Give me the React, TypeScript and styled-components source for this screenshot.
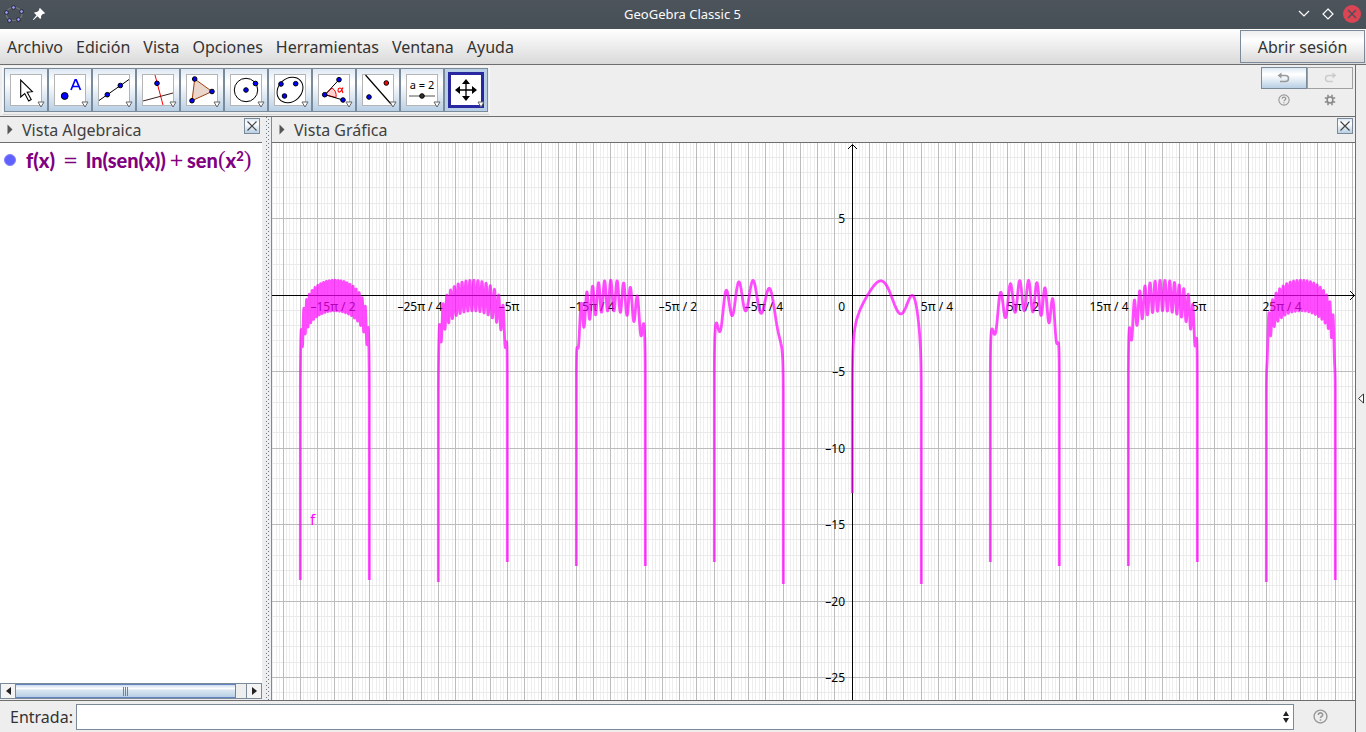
import React from "react";
import styled, { createGlobalStyle } from "styled-components";

const Global = createGlobalStyle`
  *, *::before, *::after { box-sizing: border-box; }
  html, body, #root { height: 100%; }
  body {
    margin: 0;
    overflow: hidden;
    background: #eeeeee;
    color: #333333;
    font-family: "Noto Sans", "Open Sans", sans-serif;
    font-size: 16px;
  }
  button, input { font: inherit; color: inherit; margin: 0; padding: 0; }
`;

const metal = "linear-gradient(#dde8f3 0%, #ffffff 30%, #ffffff 34%, #b8cfe5 100%)";

const Window = styled.div`
  display: flex;
  flex-direction: column;
  height: 100%;
`;

const TitleBar = styled.header`
  display: grid;
  grid-template-columns: 1fr auto 1fr;
  align-items: center;
  flex: none;
  height: 29px;
  padding: 0 5px 1px 4px;
  background: linear-gradient(#4d545b, #475057);
  color: #fcfcfc;
`;

const Title = styled.h1`
  margin: 0;
  font-size: 13px;
  font-weight: 400;
  line-height: 28px;
`;

const TitleGroup = styled.div<{ $end?: boolean }>`
  display: flex;
  align-items: center;
  gap: 6px;
  justify-content: ${(p) => (p.$end ? "flex-end" : "flex-start")};
`;

const PlainButton = styled.button<{ $w: number; $h: number }>`
  display: flex;
  align-items: center;
  justify-content: center;
  flex: none;
  width: ${(p) => p.$w}px;
  height: ${(p) => p.$h}px;
  border: 0;
  background: none;
`;

const MenuBar = styled.nav`
  display: flex;
  align-items: center;
  justify-content: space-between;
  flex: none;
  height: 36px;
  padding: 0 1px 0 7px;
  border-bottom: 1px solid #6e6e6e;
  background: linear-gradient(#ffffff, #dadada);
`;

const MenuList = styled.div`
  display: flex;
  gap: 13px;
`;

const MenuItem = styled.button`
  border: 0;
  background: none;
  line-height: 24px;
`;

const SignIn = styled.button`
  width: 125px;
  height: 33px;
  border: 1px solid #7a8a99;
  background: linear-gradient(#eeeeee, #ffffff 30%, #dadada);
`;

const Body = styled.div`
  display: flex;
  flex: 1;
  min-height: 0;
`;

const Main = styled.div`
  display: flex;
  flex-direction: column;
  flex: 1;
  min-width: 0;
`;

const PerspectiveRail = styled.button`
  display: flex;
  align-items: center;
  justify-content: center;
  flex: none;
  width: 11px;
  border: 0;
  border-left: 1px solid #6e6e6e;
  background: #eeeeee;
`;

const ToolBar = styled.div`
  display: flex;
  justify-content: space-between;
  flex: none;
  height: 52px;
  padding: 1px 2px 0 2px;
  border-bottom: 1px solid #6e6e6e;
`;

const Tools = styled.div`
  display: flex;
  height: 49px;
  padding: 1px;
  border: 1px solid #f8f8f8;
  border-bottom-color: #d4d4d4;
`;

const Tool = styled.button<{ $active?: boolean }>`
  display: flex;
  align-items: center;
  justify-content: center;
  width: 44px;
  height: 44px;
  border: 1px solid #7a8a99;
  background: ${(p) => (p.$active ? "#b8cfe5" : metal)};
  svg {
    display: block;
    overflow: visible;
    width: ${(p) => (p.$active ? 36 : 32)}px;
    height: ${(p) => (p.$active ? 36 : 32)}px;
    border: ${(p) => (p.$active ? "3px solid #2828a0" : "1px solid #b4b4b4")};
    background: #ffffff;
  }
`;

const SideTools = styled.div`
  display: grid;
  grid-template-columns: 46px 46px;
  grid-template-rows: 22px 22px;
  padding-top: 1px;
`;

const UndoButton = styled.button<{ $off?: boolean }>`
  display: flex;
  align-items: center;
  justify-content: center;
  border: 1px solid ${(p) => (p.$off ? "#a0a0a0" : "#7a8a99")};
  background: ${(p) => (p.$off ? "#eeeeee" : metal)};
`;

const SmallButton = styled.button`
  display: flex;
  align-items: center;
  justify-content: center;
  border: 0;
  background: none;
`;

const Views = styled.div`
  display: flex;
  flex: 1;
  min-height: 0;
`;

const Pane = styled.section<{ $width?: number }>`
  display: flex;
  flex-direction: column;
  flex: ${(p) => (p.$width ? "none" : "1")};
  width: ${(p) => (p.$width ? p.$width + "px" : "auto")};
  min-width: 0;
`;

const PaneHead = styled.header`
  display: flex;
  align-items: center;
  flex: none;
  gap: 8px;
  height: 26px;
  padding: 0 2px 0 6px;
  border-bottom: 1px solid #6e6e6e;
  background: #eeeeee;
`;

const PaneTitle = styled.h2`
  flex: 1;
  margin: 0;
  color: #404040;
  font-size: 16px;
  font-weight: 400;
  line-height: 24px;
`;

const CloseButton = styled.button`
  display: flex;
  align-items: center;
  justify-content: center;
  align-self: flex-start;
  width: 16px;
  height: 16px;
  margin-top: 1px;
  border: 1px solid #7a8a99;
  background: ${metal};
`;

const Splitter = styled.div`
  flex: none;
  width: 10px;
  border-right: 1px solid #7a8a99;
`;

const AlgebraBody = styled.div`
  flex: 1;
  min-height: 0;
  background: #ffffff;
`;

const Row = styled.div`
  display: flex;
  align-items: center;
  gap: 10px;
  height: 34px;
  padding-left: 4px;
`;

const Marker = styled.button`
  width: 12px;
  height: 12px;
  border: 1px solid #8080ff;
  border-radius: 50%;
  background: #6060ff;
`;

const Formula = styled.div`
  display: flex;
  align-items: center;
  color: #800080;
  font-family: Lato, sans-serif;
  font-size: 20px;
  font-weight: 900;
  line-height: 24px;
  white-space: pre;
  sup { font-size: 13px; line-height: 0; vertical-align: 7px; }
`;

const Sign = styled.span<{ $gap: number }>`
  margin: 0 ${(p) => p.$gap}px;
  font-family: "DejaVu Sans", sans-serif;
  font-size: 18px;
  font-weight: 400;
`;

const ThinParen = styled.span`
  font-family: "Liberation Serif", serif;
  font-size: 23px;
  font-weight: 400;
`;

const ScrollBar = styled.div`
  display: flex;
  flex: none;
  height: 16px;
  margin-bottom: 1px;
  border-top: 1px solid #7a8a99;
  border-bottom: 1px solid #7a8a99;
  background: #eeeeee;
`;

const ScrollArrow = styled.button`
  display: flex;
  align-items: center;
  justify-content: center;
  width: 16px;
  border: 1px solid #7a8a99;
  border-width: 0 1px;
  background: #f4f4f4;
`;

const ScrollTrack = styled.div`
  display: flex;
  flex: 1;
`;

const ScrollThumb = styled.div`
  display: flex;
  align-items: center;
  justify-content: center;
  gap: 1px;
  width: 220px;
  border: 1px solid #6382bf;
  border-left: 0;
  background: linear-gradient(#c8dbee, #ffffff 30%, #dde8f3 40%, #b8cfe5);
`;

const Grip = styled.i`
  width: 1px;
  height: 9px;
  background: #6382bf;
`;

const InputBar = styled.form`
  display: flex;
  align-items: center;
  flex: none;
  height: 32px;
  border-top: 1px solid #6e6e6e;
  padding: 0 27px 0 10px;
`;

const InputLabel = styled.label`
  width: 66px;
  line-height: 24px;
`;

const InputField = styled.div`
  display: flex;
  align-items: center;
  flex: 1;
  height: 26px;
  margin-right: 18px;
  padding-right: 4px;
  border: 1px solid #7a8a99;
  background: #ffffff;
`;

const CommandInput = styled.input`
  flex: 1;
  height: 22px;
  border: 0;
  outline: 0;
  background: transparent;
`;

const Plot = styled.svg`
  display: block;
  flex: 1;
  width: 100%;
  min-height: 0;
  background: #ffffff;
  font-family: "Noto Sans", sans-serif;
  font-size: 12px;
`;

const Dot = ({ x, y, r = 2.3, fill = "#0000ff" }: { x: number; y: number; r?: number; fill?: string }) => (
  <circle cx={x} cy={y} r={r} fill={fill} stroke="#000" strokeWidth="1" />
);

const MoreArrow = () => <path d="M27 27h6l-3 5z" fill="#fff" stroke="#666" strokeWidth="1" />;

const tools: { name: string; art: React.ReactNode }[] = [
  { name: "Elige y mueve", art: <path d="M9.700 5v17l4-3.500 4 7.500 2.500-1.500-4-7.200 5.200-.6z" fill="#fff" stroke="#000" strokeWidth="1.100" /> },
  { name: "Punto", art: <><Dot x={9.700} y={21} r={3.400} /><path d="M16 15 20.200 4.800h1l4.300 10.200M17.500 11.500h6.500" stroke="#00f" fill="none" strokeWidth="1.700" /></> },
  { name: "Recta", art: <><path d="M0 25.500 30 4.500" stroke="#000" /><Dot x={8.300} y={19.700} /><Dot x={21.300} y={10.500} /></> },
  { name: "Perpendicular", art: <><path d="M12 0l8 30" stroke="#f00" /><path d="M0 26 30 18" stroke="#402020" /><Dot x={14} y={8.300} /></> },
  { name: "Polígono", art: <><path d="M7.700 4 25 16.500 5 25.700z" fill="#ead6cb" stroke="#a04010" /><Dot x={7.700} y={4} /><Dot x={25} y={16.500} /><Dot x={5} y={25.700} /></> },
  { name: "Circunferencia", art: <><circle cx="15" cy="15" r="11.700" fill="none" stroke="#000" /><Dot x={15} y={15} /><Dot x={24.500} y={8.500} /></> },
  { name: "Elipse", art: <><ellipse cx="15" cy="15" rx="14" ry="11.500" transform="rotate(-42 15 15)" fill="none" stroke="#000" /><Dot x={6} y={9} /><Dot x={20.700} y={8.700} /><Dot x={9.500} y={21} /></> },
  { name: "Ángulo", art: <><path d="M6 19.700 13 13q5 3 4 9.500z" fill="#ffd0d0" stroke="#f00" /><path d="M6 19.700 20 4.700M6 19.700l18 5.300" stroke="#000" /><path d="M24 12.500c-2 5.500-5 5.500-5 2.800s3.300-3.300 4 0l1 2.700" fill="none" stroke="#f00" strokeWidth="1.100" /><Dot x={5.700} y={19.700} /><Dot x={20} y={4.700} /><Dot x={24} y={25} /></> },
  { name: "Simetría axial", art: <><path d="M2.500 0 28 29" stroke="#000" strokeWidth="1.200" /><Dot x={6} y={22} /><Dot x={23.300} y={8} fill="#f00" /></> },
  { name: "Deslizador", art: <><text x="15" y="14" textAnchor="middle" fontSize="11" fill="#000">a = 2</text><path d="M2 21h26" stroke="#555" /><Dot x={15} y={21} fill="#333" /></> },
  { name: "Desplaza vista gráfica", art: <><path d="M15 7v16M7 15h16" stroke="#000" strokeWidth="1.300" /><path d="M15 4l4 5h-8zM15 26l4-5h-8zM4 15l5-4v8zM26 15l-5-4v8z" fill="#000" /></> },
];

const ORIGIN_X = 580;
const ORIGIN_Y = 152;
const PI_PX = 69;
const UNIT_X = PI_PX / Math.PI;
const UNIT_Y = 15.3;

/* Grid lines sit on the pixel that holds their exact position. */
const GRID_PX = 17.245;
const gridX = (quarters: number) => Math.floor(ORIGIN_X + 0.15 + quarters * GRID_PX);
const gridY = (value: number) => Math.floor(ORIGIN_Y - value * UNIT_Y + 0.01);

/* Each branch is one interval where sin x > 0; the tails are the lowest pixel reached on each side. */
const branches = [
  { k: -8, left: 437, right: 437 },
  { k: -6, left: 439, right: 419 },
  { k: -4, left: 423, right: 423 },
  { k: -2, left: 419, right: 441 },
  { k: 0, left: 350, right: 441 },
  { k: 2, left: 419, right: 423 },
  { k: 4, left: 423, right: 419 },
  { k: 6, left: 439, right: 437 },
];

const branchPath = ({ k, left, right }: { k: number; left: number; right: number }) => {
  const x0 = ORIGIN_X + 0.3 + k * PI_PX;
  const points = [`M${x0} ${left}`];
  const steps = 1400;
  for (let i = 1; i < steps; i++) {
    const x = (k + i / steps) * Math.PI;
    const y = Math.log(Math.sin(x)) + Math.sin(x * x);
    points.push(`L${(ORIGIN_X + 0.3 + x * UNIT_X).toFixed(2)} ${(ORIGIN_Y + 0.5 - y * UNIT_Y).toFixed(2)}`);
  }
  points.push(`L${x0 + PI_PX} ${right}`);
  return points.join("");
};

const range = (from: number, to: number) => Array.from({ length: to - from + 1 }, (_, i) => from + i);

const xLabels: [number, string][] = [
  [-30, "–15π / 2"], [-25, "–25π / 4"], [-20, "–5π"], [-15, "–15π / 4"], [-10, "–5π / 2"], [-5, "–5π / 4"],
  [5, "5π / 4"], [10, "5π / 2"], [15, "15π / 4"], [20, "5π"], [25, "25π / 4"],
];

const labelX = (quarters: number) => gridX(quarters) + (quarters % 4 === 0 ? 2 : -1);

const Graph = () => (
  <Plot role="img" aria-label="Gráfica de f">
    <g shapeRendering="crispEdges">
      {range(-170, 500).filter((i) => i % 5).map((i) => {
        const x = gridX(i / 5) + 0.5;
        return <line key={i} x1={x} x2={x} y1="0" y2="100%" stroke="#eeeeee" />;
      })}
      {range(-60, 10).filter((i) => i % 5).map((i) => {
        const y = gridY(i) + 0.5;
        return <line key={i} x1="0" x2="100%" y1={y} y2={y} stroke="#eaeaea" />;
      })}
      {range(-33, 100).map((i) => {
        const x = gridX(i) + 0.5;
        return <line key={i} x1={x} x2={x} y1="0" y2="100%" stroke="#bcbcbc" />;
      })}
      {range(-12, 1).map((i) => {
        const y = gridY(i * 5) + 0.5;
        return <line key={i} x1="0" x2="100%" y1={y} y2={y} stroke="#bcbcbc" />;
      })}
      <line x1="0" x2="100%" y1={ORIGIN_Y + 0.5} y2={ORIGIN_Y + 0.5} stroke="#000" />
      <line x1={ORIGIN_X + 0.5} x2={ORIGIN_X + 0.5} y1="2" y2="100%" stroke="#000" />
    </g>
    <path d={`M${ORIGIN_X - 4} 6l4.500-4.500 4.500 4.500`} fill="none" stroke="#000" />
    <svg x="100%" y={ORIGIN_Y} overflow="visible">
      <path d="M-5-4l4.500 4.500-4.500 4.500" fill="none" stroke="#000" />
    </svg>
    <g fill="#000">
      {xLabels.map(([i, label]) => (
        <text key={i} x={labelX(i)} y={ORIGIN_Y + 16} textAnchor="middle">{label}</text>
      ))}
      <text x={ORIGIN_X - 7} y={ORIGIN_Y + 16} textAnchor="end">0</text>
      {[5, -5, -10, -15, -20, -25].map((v) => (
        <text key={v} x={ORIGIN_X - 7} y={gridY(v) + 5} textAnchor="end">
          {v < 0 ? `–${-v}` : v}
        </text>
      ))}
    </g>
    <g fill="none" stroke="#ff00ff" strokeOpacity="0.7" strokeWidth="2.800" strokeLinejoin="round">
      {branches.map((b) => <path key={b.k} d={branchPath(b)} />)}
    </g>
    <text x="38" y="382" fill="#ff00ff" fontSize="15">f</text>
  </Plot>
);

const CloseX = () => (
  <svg width="12" height="12"><path d="M1.500 1.500l9 9M10.500 1.500l-9 9" stroke="#444" strokeWidth="1.200" /></svg>
);

const Disclosure = () => (
  <svg width="8" height="12"><path d="M1.500 .500l5 5-5 5z" fill="#555" /></svg>
);

const HelpIcon = ({ size }: { size: number }) => (
  <svg width={size} height={size} viewBox="0 0 14 14" fill="none" stroke="#999">
    <circle cx="7" cy="7" r="6" strokeWidth="1.300" />
    <path d="M5 5.600C5 3 9 3 9 5.500 9 7 7 6.800 7 8.500M7 9.500v1.400" strokeWidth="1.500" />
  </svg>
);

const pentagon: [number, number][] = [[13.500, 7.500], [21.500, 11.500], [18.500, 19.500], [9.500, 20.500], [6.500, 12.500]];

export default function App() {
  return (
    <>
      <Global />
      <Window>
        <TitleBar>
          <TitleGroup>
            <svg width="22" height="28" viewBox="4 0 22 28">
              <ellipse cx="14" cy="14" rx="8" ry="6.500" fill="none" stroke="#777" strokeWidth="1.200" />
              {pentagon.map(([x, y]) => <circle key={x} cx={x} cy={y} r="1.900" fill="#9999ff" stroke="#222" />)}
            </svg>
            <PlainButton $w={14} $h={20} aria-label="Fijar">
              <svg width="14" height="14"><path d="M8 1l5 5-1 1-1-.3L9 9c.4 1.500 0 2.500-.8 3L5.500 9.300 1.500 13l-.6-.5L4.500 8.300 2 5.800c.8-.8 1.900-1 3-.8l2.300-2L7 2z" fill="#fff" /></svg>
            </PlainButton>
          </TitleGroup>
          <Title>GeoGebra Classic 5</Title>
          <TitleGroup $end>
            <PlainButton $w={18} $h={20} aria-label="Minimizar">
              <svg width="12" height="8"><path d="M1 1l5 5 5-5" fill="none" stroke="#fff" strokeWidth="1.200" /></svg>
            </PlainButton>
            <PlainButton $w={18} $h={20} aria-label="Maximizar">
              <svg width="12" height="12"><path d="M6 1l5 5-5 5-5-5z" fill="none" stroke="#fff" strokeWidth="1.200" /></svg>
            </PlainButton>
            <PlainButton $w={18} $h={20} aria-label="Cerrar">
              <svg width="18" height="18"><circle cx="9" cy="9" r="9" fill="#da4453" /><path d="M5 5l8 8M13 5l-8 8" stroke="#475057" strokeWidth="1.300" /></svg>
            </PlainButton>
          </TitleGroup>
        </TitleBar>

        <MenuBar>
          <MenuList>
            {["Archivo", "Edición", "Vista", "Opciones", "Herramientas", "Ventana", "Ayuda"].map((m) => (
              <MenuItem key={m}>{m}</MenuItem>
            ))}
          </MenuList>
          <SignIn>Abrir sesión</SignIn>
        </MenuBar>

        <Body>
          <Main>
            <ToolBar>
              <Tools>
                {tools.map((t, i) => (
                  <Tool key={t.name} aria-label={t.name} $active={i === tools.length - 1}>
                    <svg>{t.art}<MoreArrow /></svg>
                  </Tool>
                ))}
              </Tools>
              <SideTools>
                <UndoButton aria-label="Deshacer">
                  <svg width="14" height="12" fill="none" stroke="#999" strokeWidth="1.500"><path d="M3 3.500h5.500a3 3 0 010 6H3" /><path d="M4.500 .500v6l-4-3z" fill="#999" stroke="none" /></svg>
                </UndoButton>
                <UndoButton aria-label="Rehacer" $off>
                  <svg width="14" height="12" fill="none" stroke="#ccc" strokeWidth="1.500"><path d="M11 3.500H5.500a3 3 0 000 6H10" /><path d="M9.500 .500v6l4-3z" fill="#ccc" stroke="none" /></svg>
                </UndoButton>
                <SmallButton aria-label="Ayuda"><HelpIcon size={12} /></SmallButton>
                <SmallButton aria-label="Preferencias">
                  <svg width="12" height="12" fill="none" stroke="#888"><circle cx="6" cy="6" r="2.900" strokeWidth="1.500" /><path d="M4 .800v2.500M8 .800v2.500M4 8.700v2.500M8 8.700v2.500M.800 4h2.500M.800 8h2.500M8.700 4h2.500M8.700 8h2.500" strokeWidth="1.500" /></svg>
                </SmallButton>
              </SideTools>
            </ToolBar>

            <Views>
              <Pane $width={262}>
                <PaneHead>
                  <Disclosure />
                  <PaneTitle>Vista Algebraica</PaneTitle>
                  <CloseButton aria-label="Cerrar"><CloseX /></CloseButton>
                </PaneHead>
                <AlgebraBody>
                  <Row>
                    <Marker aria-label="Mostrar objeto" />
                    <Formula>
                      f(x)<Sign $gap={8}>=</Sign>ln(sen(x))<Sign $gap={3}>+</Sign>sen<ThinParen>(</ThinParen><span>x<sup>2</sup></span><ThinParen>)</ThinParen>
                    </Formula>
                  </Row>
                </AlgebraBody>
                <ScrollBar>
                  <ScrollArrow aria-label="Izquierda"><svg width="5" height="8"><path d="M5 0v8L0 4z" fill="#222" /></svg></ScrollArrow>
                  <ScrollTrack><ScrollThumb><Grip /><Grip /><Grip /></ScrollThumb></ScrollTrack>
                  <ScrollArrow aria-label="Derecha"><svg width="5" height="8"><path d="M0 0v8l5-4z" fill="#222" /></svg></ScrollArrow>
                </ScrollBar>
              </Pane>
              <Splitter>
                <svg width="9" height="100%" shapeRendering="crispEdges">
                  <defs>
                    <pattern id="grip" width="4" height="4" patternUnits="userSpaceOnUse">
                      <path d="M0 0h1v1H0zM2 2h1v1H2z" fill="#66788a" />
                    </pattern>
                  </defs>
                  <rect x="4" width="4" height="100%" fill="url(#grip)" />
                </svg>
              </Splitter>
              <Pane>
                <PaneHead>
                  <Disclosure />
                  <PaneTitle>Vista Gráfica</PaneTitle>
                  <CloseButton aria-label="Cerrar"><CloseX /></CloseButton>
                </PaneHead>
                <Graph />
              </Pane>
            </Views>

            <InputBar>
              <InputLabel htmlFor="command">Entrada:</InputLabel>
              <InputField>
                <CommandInput id="command" />
                <svg width="6" height="12"><path d="M0 5l3-5 3 5zM0 7l3 5 3-5z" fill="#222" /></svg>
              </InputField>
              <PlainButton type="button" $w={16} $h={16} aria-label="Ayuda de entrada"><HelpIcon size={15} /></PlainButton>
            </InputBar>
          </Main>
          <PerspectiveRail aria-label="Disposiciones">
            <svg width="8" height="12"><path d="M6.500 1v9L1.500 5.500z" fill="#fff" stroke="#333" /></svg>
          </PerspectiveRail>
        </Body>
      </Window>
    </>
  );
}
